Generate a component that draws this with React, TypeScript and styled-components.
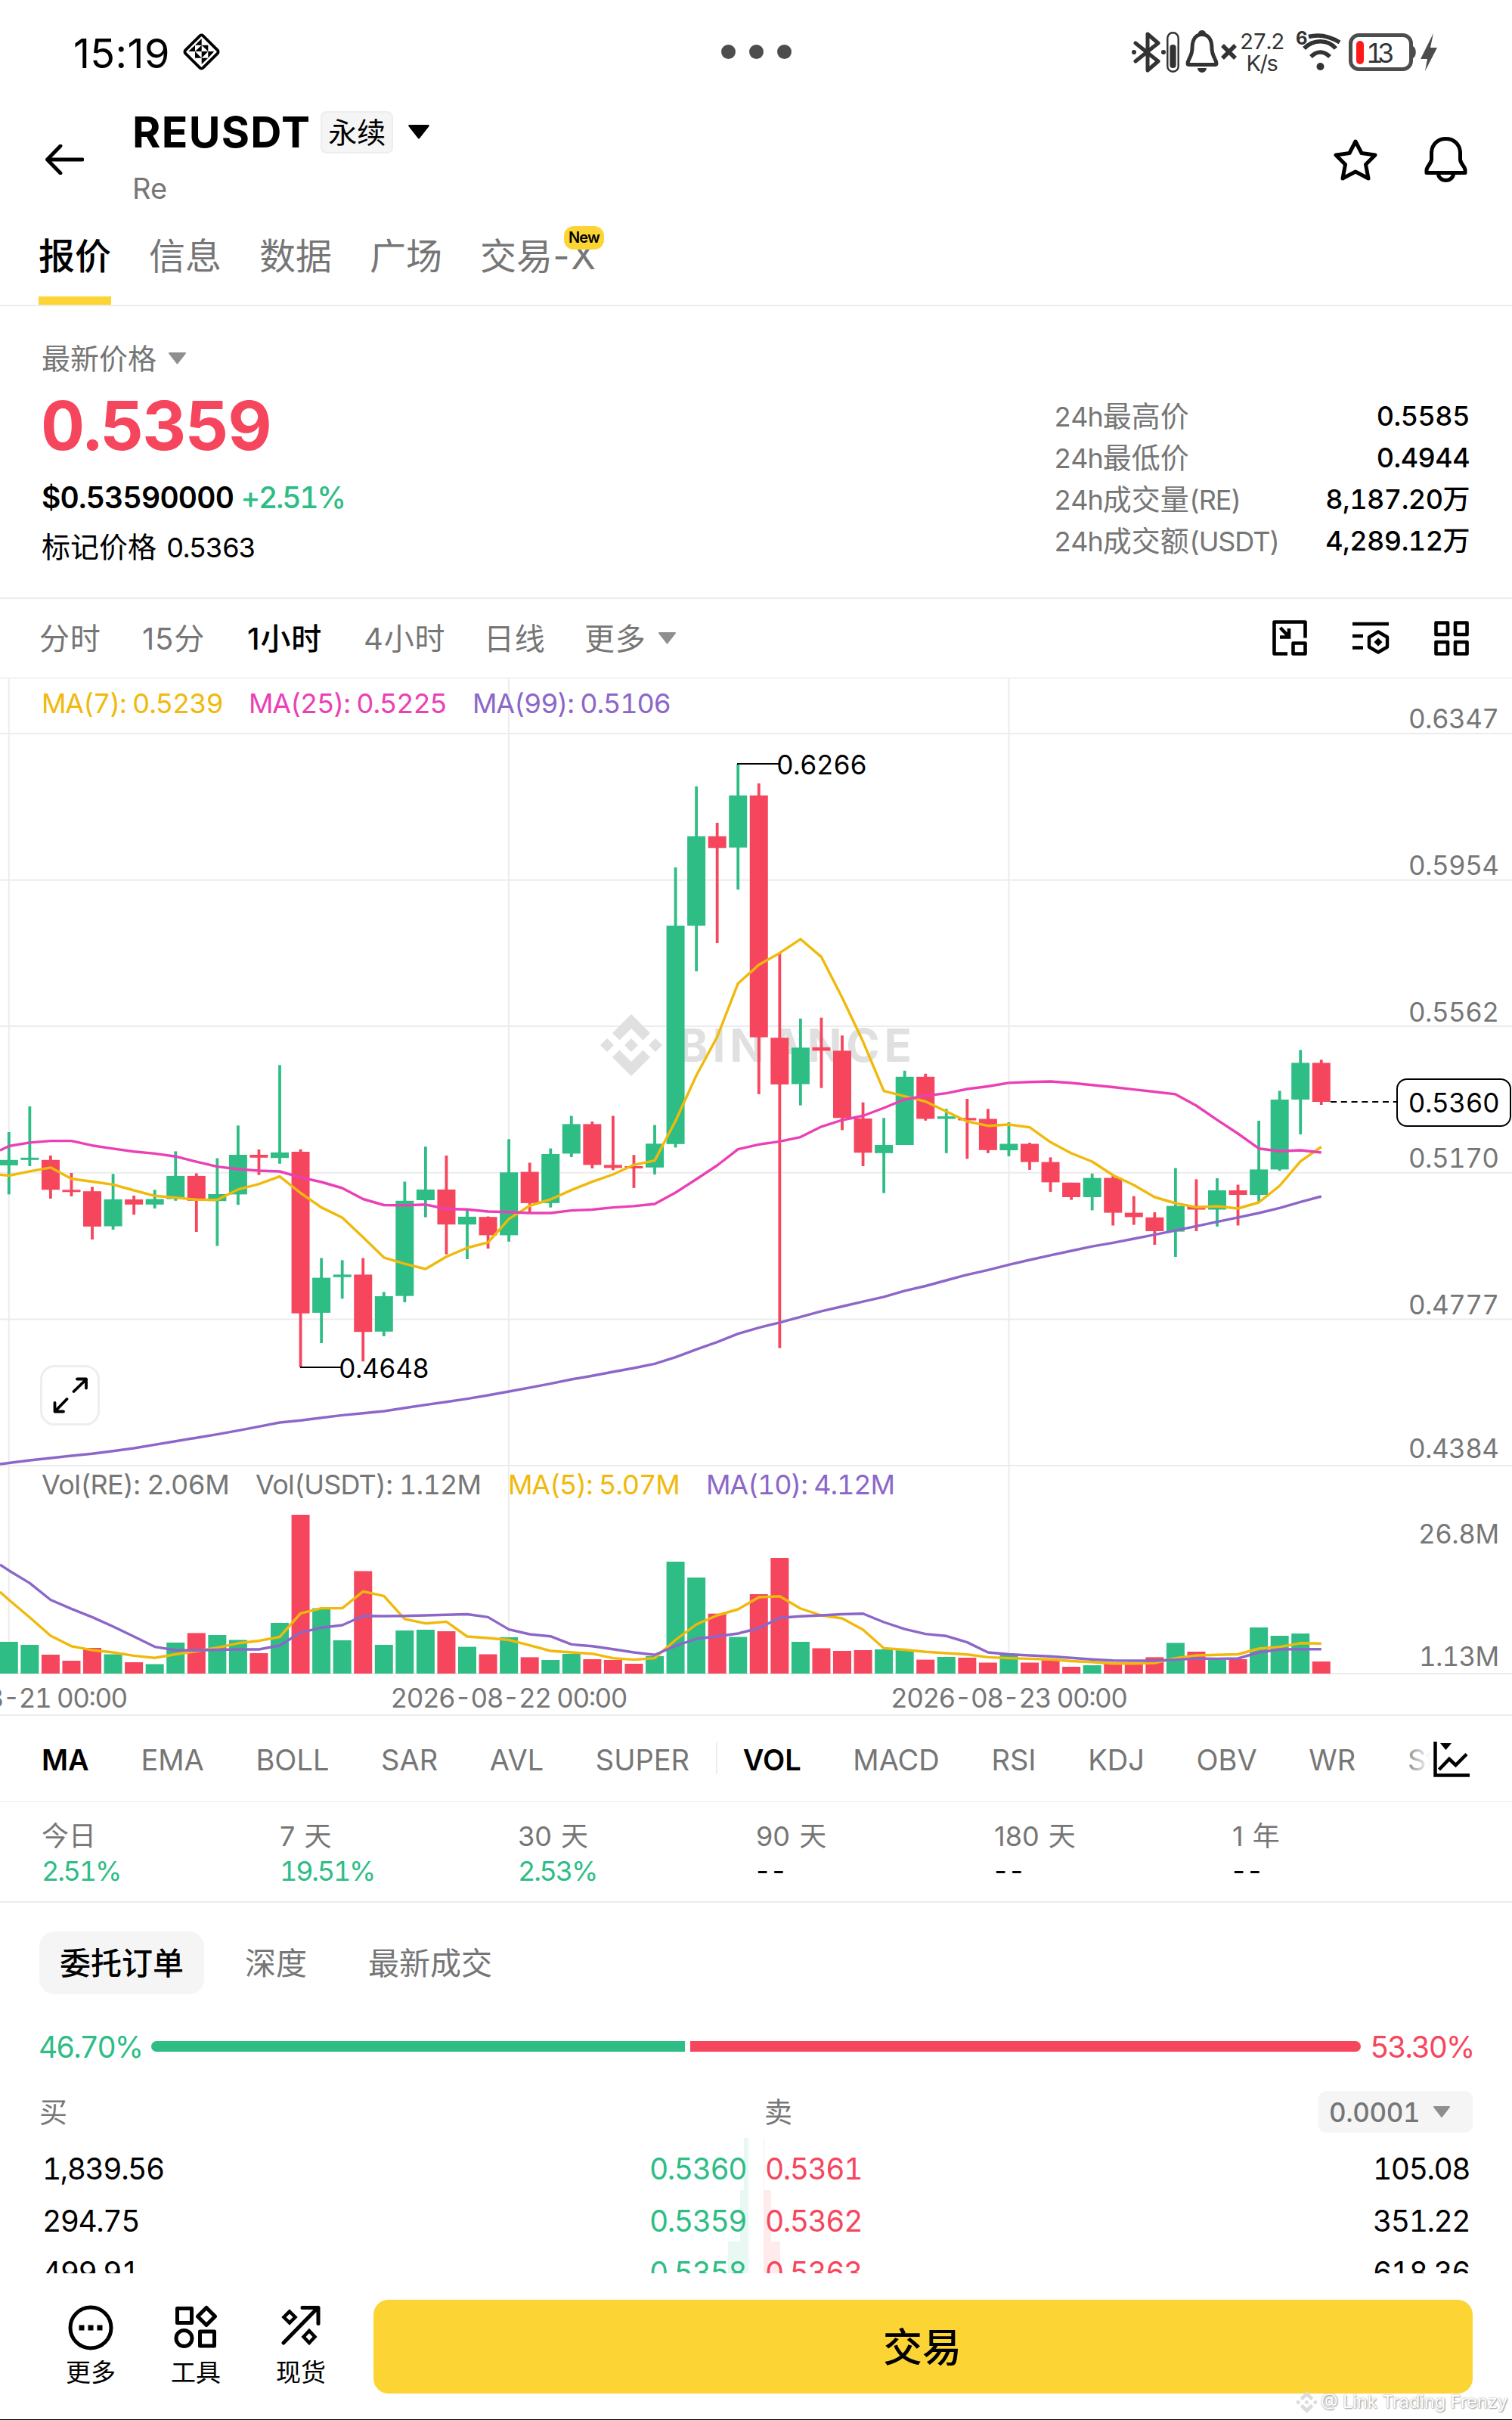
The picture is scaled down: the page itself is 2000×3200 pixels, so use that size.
import React from 'react';
import styled, { createGlobalStyle } from 'styled-components';

const UP = '#2ebd85';
const DOWN = '#f6465d';
const BRAND = '#fcd535';
const GRAY = '#767676';
const MUTED = '#8f8f8f';
const LINE = '#ececec';
const MA_YELLOW = '#f0b90b';
const MA_PINK = '#eb40b5';
const MA_PURPLE = '#8c66c8';

const FONT = "Inter, 'Noto Sans CJK SC', sans-serif";

// --- chart data, in chart units (y grows downwards) ---

const FIRST_X = 11.8;
const STEP = 27.555;
const CANDLE_W = 24;
const CHART_TOP = 898;
const VOL_BASE = 2213;

const xAt = (i: number) => FIRST_X + STEP * i;

type Candle = [up: 0 | 1, high: number, top: number, bottom: number, low: number, vol: number];

const candles: Candle[] = [
  [1, 1497, 1533.8, 1541, 1579.4, 2171],
  [1, 1463, 1530.8, 1533.8, 1542, 2175],
  [0, 1528, 1533.8, 1573.3, 1585, 2188],
  [0, 1551, 1573.3, 1576, 1582, 2196],
  [0, 1569.4, 1575.2, 1621.9, 1639, 2179],
  [1, 1552.2, 1585.9, 1621.5, 1626, 2187.5],
  [0, 1581, 1586, 1592.8, 1606.2, 2198],
  [1, 1573.3, 1585.5, 1592.8, 1598, 2200.5],
  [1, 1522.4, 1554.9, 1585.5, 1587.8, 2172],
  [0, 1551.5, 1554.9, 1587.8, 1629, 2159.4],
  [1, 1531.5, 1579, 1588.2, 1647.5, 2162],
  [1, 1488.3, 1527, 1579.4, 1593.2, 2168.5],
  [0, 1520, 1527, 1530.8, 1553.7, 2186],
  [1, 1408.3, 1523.9, 1531.2, 1538.8, 2146],
  [0, 1519.7, 1523, 1736.7, 1807.9, 2003],
  [1, 1663.6, 1689.6, 1735.9, 1776, 2126.6],
  [1, 1666.3, 1685.4, 1688.8, 1717.2, 2169],
  [0, 1663.6, 1685.4, 1761.2, 1800.2, 2077.5],
  [1, 1708.4, 1714, 1760.8, 1766.9, 2175],
  [1, 1562.5, 1587.8, 1713.7, 1722, 2156],
  [1, 1516.2, 1572.9, 1587, 1609.6, 2155],
  [0, 1528, 1572.9, 1619.2, 1658.6, 2157],
  [1, 1600.8, 1608.9, 1619.2, 1665, 2177.6],
  [0, 1608.5, 1609.2, 1633.4, 1651, 2187.5],
  [1, 1506.3, 1550.3, 1633.4, 1641.8, 2165],
  [0, 1537.5, 1549.6, 1590.9, 1603, 2191.4],
  [1, 1518.6, 1526, 1590.9, 1596.6, 2195],
  [1, 1475.5, 1486.4, 1525.4, 1530, 2187],
  [0, 1483, 1486.4, 1540.4, 1545, 2194],
  [0, 1475.5, 1540.4, 1544.4, 1547.3, 2195],
  [0, 1527.2, 1542, 1545, 1570.8, 2200],
  [1, 1487.6, 1512.3, 1543.8, 1553, 2190],
  [1, 1147, 1224, 1512.8, 1517.4, 2065],
  [1, 1039.8, 1105.8, 1224, 1284.3, 2086],
  [0, 1088, 1105.8, 1121.3, 1247, 2133.7],
  [1, 1010, 1051.8, 1120.7, 1176.4, 2164.5],
  [0, 1035.8, 1051.8, 1371.6, 1446.8, 2108],
  [0, 1260.8, 1372.2, 1434, 1782.6, 2060],
  [1, 1346.9, 1385.3, 1433.6, 1461.7, 2171],
  [0, 1345.7, 1384.8, 1389.4, 1438.7, 2179.5],
  [0, 1369.3, 1389.4, 1478.3, 1494.4, 2183],
  [0, 1457.7, 1479, 1524.2, 1542, 2182],
  [1, 1478.3, 1514, 1524.8, 1577.6, 2181],
  [1, 1415.8, 1423.8, 1514, 1514, 2182],
  [0, 1419.8, 1423.8, 1479.5, 1481.8, 2194.6],
  [1, 1466.3, 1476.2, 1479.5, 1524.8, 2191],
  [0, 1453, 1478.3, 1481.5, 1532.3, 2192],
  [0, 1466.3, 1479.5, 1520.8, 1524.8, 2198.5],
  [1, 1484, 1512.5, 1521, 1529, 2187.5],
  [0, 1511, 1512.5, 1536.6, 1546.9, 2198.5],
  [0, 1530.4, 1536.6, 1563.4, 1575.9, 2195.4],
  [0, 1563.8, 1563.8, 1583, 1586.6, 2204],
  [1, 1551.8, 1557.6, 1583, 1600.4, 2202],
  [0, 1554.5, 1557.6, 1603.6, 1620.5, 2199],
  [0, 1581.7, 1603.6, 1609.4, 1619.6, 2199],
  [0, 1603, 1609.8, 1628, 1646, 2191.4],
  [1, 1544.6, 1594.6, 1628.6, 1662, 2172.4],
  [0, 1559.4, 1594.6, 1599.5, 1628, 2184],
  [1, 1558, 1574, 1599.5, 1621.9, 2195],
  [0, 1566.5, 1574, 1580, 1620.5, 2194],
  [1, 1482, 1546.4, 1580, 1589.3, 2152],
  [1, 1442.4, 1454, 1546.4, 1548.2, 2163],
  [1, 1388.4, 1405.4, 1454, 1500, 2160],
  [0, 1401.3, 1405.4, 1457, 1461, 2197]
];

// the first value of every series is the one at the left edge (x = 0)
const ma7 = [
  1553.4, 1554.5, 1548.8, 1543.8, 1558.7, 1562.5, 1566.4, 1574, 1581.3, 1583.6, 1586.3, 1586.6, 1572.9, 1565.6, 1555.6, 1577.5,
  1596.6, 1610, 1636, 1662.8, 1671.2, 1678, 1661.7, 1650, 1642.9, 1611.9, 1594.3, 1586, 1573.6, 1562.7, 1553, 1540.3, 1534.6,
  1482.3, 1422, 1371, 1300.4, 1275.7, 1260.2, 1241.8, 1265.4, 1319.3, 1377.3, 1442.7, 1449.6, 1456.5, 1469.7, 1482.9, 1488.7,
  1487, 1490.6, 1510.3, 1525, 1536, 1554, 1567, 1583, 1591, 1596.4, 1595, 1598, 1590, 1568, 1535.7, 1516.5
];
const ma25 = [
  1521.2, 1515.5, 1510.9, 1508.6, 1508.6, 1514.7, 1518.9, 1522.7, 1525.4, 1529.2, 1536.1, 1542.6, 1546, 1548, 1549, 1556.8,
  1563, 1571, 1585.5, 1593.5, 1593.9, 1592.8, 1598.5, 1599.3, 1602, 1602.7, 1604, 1604, 1600.6, 1599.5, 1596.6, 1594.9, 1592,
  1577, 1559.3, 1541, 1519.7, 1513.4, 1509.4, 1503.6, 1489.8, 1481, 1475.5, 1465, 1453.7, 1449, 1445.6, 1440, 1436.5, 1431.9,
  1430.7, 1430, 1432, 1434.8, 1437.5, 1440.6, 1443.7, 1446.9, 1462, 1480.8, 1499, 1518.7, 1522.3, 1521, 1524
];
const ma99 = [
  1936, 1934.5, 1931, 1928, 1925, 1922.3, 1918.8, 1915, 1910.4, 1905.8, 1901.2, 1896.6, 1891.7, 1886.3, 1881, 1878.3, 1874.8,
  1871.4, 1868.7, 1866, 1861.8, 1857.6, 1853.8, 1849.6, 1845, 1840, 1834.8, 1829.6, 1824, 1819.3, 1814, 1809, 1803.3, 1794.7,
  1784.3, 1774.6, 1763.7, 1755.6, 1748.8, 1741.3, 1733.8, 1727.5, 1721.2, 1714.9, 1706.8, 1700.5, 1693, 1685.6, 1679.3, 1672.4,
  1666, 1659.8, 1654, 1648.2, 1643.3, 1638, 1632.6, 1627.2, 1621.4, 1615.6, 1609.8, 1604, 1597.3, 1589.3, 1582
];
const volMa5 = [
  2105, 2115.5, 2138.8, 2163, 2176.8, 2182, 2185, 2189.4, 2192.2, 2187.5, 2183.5, 2178.8, 2172.8, 2169.7, 2164.5, 2133.3,
  2126.6, 2126.6, 2104.4, 2110.4, 2140.8, 2146.7, 2144.4, 2164, 2166, 2168.5, 2175.6, 2183, 2185, 2186.7, 2192.6, 2194.6,
  2192.6, 2168.5, 2148, 2136, 2128, 2112, 2110.8, 2127, 2136, 2140, 2155, 2179.5, 2181.5, 2184.3, 2186, 2187.8, 2191.4,
  2192.6, 2193.4, 2194.2, 2196.5, 2197.7, 2199.7, 2199.7, 2199, 2192.6, 2189, 2188.2, 2187.5, 2180, 2177.6, 2172.8, 2173.2
];
const volMa10 = [
  2069, 2076.7, 2093.4, 2115.5, 2127.4, 2138.4, 2150.7, 2164, 2177.6, 2182, 2182.3, 2181.5, 2181, 2181, 2176, 2158.6, 2152.3,
  2149, 2136.8, 2137, 2136.8, 2136, 2135.3, 2134.5, 2138.4, 2154.6, 2161, 2163.7, 2174.4, 2176.8, 2180.7, 2185, 2188.2, 2176.4,
  2167, 2163.7, 2160, 2153, 2139.2, 2137.2, 2136, 2134.5, 2133.7, 2145, 2154.2, 2160.6, 2163.3, 2171.6, 2185, 2187.5, 2189,
  2190.2, 2192.2, 2194.2, 2195.8, 2196, 2196, 2194.6, 2193, 2193.4, 2193, 2185, 2181, 2180.7, 2180.7
];

const toPoints = (values: number[]) => values.map((y, i) => `${i === 0 ? 0 : xAt(i - 1)},${y}`).join(' ');

const priceAxis = [
  { label: '0.6347', line: 970, baseline: 962.5 },
  { label: '0.5954', line: 1163.8, baseline: 1157 },
  { label: '0.5562', line: 1357, baseline: 1351 },
  { label: '0.5170', line: 1550.7, baseline: 1544 },
  { label: '0.4777', line: 1744.4, baseline: 1738 },
  { label: '0.4384', line: 1938, baseline: 1928 }
];

const dayLines = [
  { x: 11.8, label: '2026-08-21 00:00' },
  { x: 673, label: '2026-08-22 00:00' },
  { x: 1334.5, label: '2026-08-23 00:00' }
];

const stats = [
  { pre: '24h', zh: '最高价', unit: '', value: '0.5585' },
  { pre: '24h', zh: '最低价', unit: '', value: '0.4944' },
  { pre: '24h', zh: '成交量', unit: '(RE)', value: '8,187.20万' },
  { pre: '24h', zh: '成交额', unit: '(USDT)', value: '4,289.12万' }
];

const mainIndicators = ['MA', 'EMA', 'BOLL', 'SAR', 'AVL', 'SUPER'];
const subIndicators = ['VOL', 'MACD', 'RSI', 'KDJ', 'OBV', 'WR', 'StochRSI'];

const periods = [
  { label: '今日', value: '2.51%' },
  { label: '7 天', value: '19.51%' },
  { label: '30 天', value: '2.53%' },
  { label: '90 天', value: '--' },
  { label: '180 天', value: '--' },
  { label: '1 年', value: '--' }
];

const bids = [
  { amount: '1,839.56', price: '0.5360', depth: 6 },
  { amount: '294.75', price: '0.5359', depth: 11 },
  { amount: '499.91', price: '0.5358', depth: 27 }
];
const asks = [
  { amount: '105.08', price: '0.5361', depth: 1 },
  { amount: '351.22', price: '0.5362', depth: 10 },
  { amount: '618.36', price: '0.5363', depth: 22 }
];

// --- icons ---

const Caret = ({ size = 24, color = MUTED }: { size?: number; color?: string }) => (
  <svg width={size} height={size * 0.64} viewBox="0 0 25 16">
    <path d="M2 1h21L12.5 14.5z" fill={color} stroke={color} strokeWidth="2" strokeLinejoin="round" />
  </svg>
);

const LatticeIcon = () => (
  <svg width="51" height="51" viewBox="0 0 51 51">
    <rect x="9" y="9" width="33" height="33" rx="3" transform="rotate(45 25.5 25.5)" fill="none" stroke="#000" strokeWidth="3.8" />
    <path
      d="M17 16.7h8.7V8zM8.3 25H17v-8.3zM17 25h8.7v-8.3zM25.7 16.7h8.6V25zM17 25v8.7h8.7zM25.7 25v8.7l8.6-8.7zM34.3 25h8l-8 8.7zM25.7 33.7h8.6L25.7 42z"
      fill="#000"
    />
  </svg>
);

const BluetoothIcon = () => (
  <svg width="46" height="54" viewBox="0 0 46 54">
    <path d="M5 15l30 24-14 12V3l14 12L5 39" fill="none" stroke="#333" strokeWidth="5" strokeLinejoin="round" strokeLinecap="round" />
    <circle cx="3" cy="27" r="3" fill="#333" />
    <circle cx="42" cy="27" r="3" fill="#333" />
  </svg>
);

const StickIcon = () => (
  <svg width="17" height="54" viewBox="0 0 17 54">
    <rect x="1.3" y="1.3" width="14.4" height="51.4" rx="7" fill="none" stroke="#333" strokeWidth="2.4" />
    <rect x="4.4" y="17" width="8.2" height="31" rx="4" fill="#333" />
  </svg>
);

const MutedBellIcon = () => (
  <svg width="70" height="57" viewBox="0 0 70 57">
    <path
      d="M9 24C9 12 14 5.5 22 5.5S35 12 35 24c0 10 6 15 6 20 0 1-1 1.5-2 1.5H5c-1 0-2-.5-2-1.5 0-5 6-10 6-20z"
      fill="none"
      stroke="#333"
      strokeWidth="5"
    />
    <path d="M17 4a5 4 0 0 1 10 0zM16 50h12a6 6 0 0 1-12 0z" fill="#333" />
    <path d="M49 20l17 17M66 20L49 37" stroke="#333" strokeWidth="5.5" />
  </svg>
);

const WifiIcon = () => (
  <svg width="64" height="56" viewBox="0 0 64 56">
    <text x="0" y="18" fontSize="24" fontWeight="700" fill="#333">
      6
    </text>
    <path d="M17 7.5C32 3.5 46 7.5 58 15M11 23c12-12.5 31-12.5 42 0M20 34c8-8 17-8 25 0" fill="none" stroke="#333" strokeWidth="5.5" />
    <circle cx="32.5" cy="47" r="5" fill="#333" />
  </svg>
);

const BatteryIcon = () => (
  <svg width="90" height="50" viewBox="0 0 90 50">
    <rect x="2.5" y="2.5" width="80" height="45" rx="11" fill="none" stroke="#4d4d4d" strokeWidth="5" />
    <path d="M85 17c5 2 5 14 0 16z" fill="#4d4d4d" />
    <rect x="10" y="10" width="10" height="31" rx="5" fill="#ff1a1a" />
    <text x="23" y="38.5" fontSize="35" fill="#333" textLength="38">
      13
    </text>
  </svg>
);

const BoltIcon = () => (
  <svg width="22" height="50" viewBox="0 0 22 50">
    <path d="M17 0L0 34h9L6 50 22 19h-9z" fill="#4d4d4d" />
  </svg>
);

const BackIcon = () => (
  <svg width="52" height="40" viewBox="0 0 52 40">
    <path d="M50 20H4M21 2L3.5 20 21 38" fill="none" stroke="#000" strokeWidth="4.8" strokeLinejoin="round" strokeLinecap="round" />
  </svg>
);

const StarIcon = () => (
  <svg width="58" height="58" viewBox="0 0 58 58">
    <path
      d="M29 5l8 15.5 18 2.5-12.5 12.5L46 54l-17-9-17 9 3.5-18.5L3 23l18-2.5z"
      fill="none"
      stroke="#000"
      strokeWidth="5"
      strokeLinejoin="round"
    />
  </svg>
);

const BellIcon = () => (
  <svg width="57" height="60" viewBox="0 0 57 60">
    <path
      d="M3 44C3 39 9 36 9.5 30V20C10.5 9 18.5 2.5 28.5 2.5S46.5 9 47.5 20v10C48 36 54 39 54 44v3.5H3z"
      fill="none"
      stroke="#000"
      strokeWidth="5"
      strokeLinejoin="round"
    />
    <path d="M18.5 48.5a10 9 0 0 0 20 0" fill="none" stroke="#000" strokeWidth="5" />
  </svg>
);

const MinimizeIcon = () => (
  <svg width="46" height="47" viewBox="0 0 46 47">
    <path d="M20 44.5H2.5v-42h41v21" fill="none" stroke="#000" strokeWidth="4.6" strokeLinejoin="round" />
    <path d="M10.5 10l11 11.5M22 11v11.5H10" fill="none" stroke="#000" strokeWidth="4.6" />
    <rect x="27.5" y="30.5" width="16" height="14" fill="none" stroke="#000" strokeWidth="4.6" strokeLinejoin="round" />
  </svg>
);

const SettingsIcon = () => (
  <svg width="50" height="44" viewBox="0 0 50 44">
    <path d="M1 3h48M1 19h14M1 34.5h14" stroke="#000" strokeWidth="4.6" />
    <path d="M35 13.5l12 7v13L35 40.5l-12-7v-13z" fill="none" stroke="#000" strokeWidth="4.4" strokeLinejoin="round" />
    <path d="M35 21.5l5.5 5.5-5.5 5.5-5.5-5.5z" fill="#000" />
  </svg>
);

const GridIcon = () => (
  <svg width="46" height="46" viewBox="0 0 46 46">
    <g fill="none" stroke="#000" strokeWidth="4.6" strokeLinejoin="round">
      <rect x="2.5" y="2.5" width="15.5" height="15.5" />
      <rect x="28" y="2.5" width="15.5" height="15.5" />
      <rect x="2.5" y="28" width="15.5" height="15.5" />
      <rect x="28" y="28" width="15.5" height="15.5" />
    </g>
  </svg>
);

const ExpandIcon = () => (
  <svg width="46" height="48" viewBox="0 0 46 48">
    <path
      d="M27.5 19L44 3M32 2.5h12v12M18.5 29L3 45M2.5 34v11.5H14"
      fill="none"
      stroke="#000"
      strokeWidth="3.8"
      strokeLinejoin="round"
      strokeLinecap="round"
    />
  </svg>
);

const ChartIcon = () => (
  <svg width="48" height="48" viewBox="0 0 48 48">
    <path d="M2.5 1v44.5H48" fill="none" stroke="#000" strokeWidth="4.5" />
    <path d="M7.5 38L21 24l8.5 8L44 17.5" fill="none" stroke="#000" strokeWidth="4.5" />
    <path d="M9 3h15l-7.5 9z" fill="#000" />
  </svg>
);

const MoreIcon = () => (
  <svg width="60" height="60" viewBox="0 0 60 60">
    <circle cx="30" cy="30" r="27" fill="none" stroke="#000" strokeWidth="5" />
    <path d="M14.5 26.5h7v7h-7zM26.5 26.5h7v7h-7zM38.5 26.5h7v7h-7z" fill="#000" />
  </svg>
);

const ToolsIcon = () => (
  <svg width="58" height="58" viewBox="0 0 58 58">
    <g fill="none" stroke="#000" strokeWidth="5" strokeLinejoin="round">
      <rect x="4.5" y="4.5" width="19" height="19" />
      <path d="M43 3.5L54.5 15 43 26.5 31.5 15z" />
      <circle cx="13.5" cy="44" r="10.5" />
      <rect x="34.5" y="35" width="19" height="19" />
    </g>
  </svg>
);

const SpotIcon = () => (
  <svg width="52" height="54" viewBox="0 0 52 54">
    <path d="M3 50L48 4M28 3.5h21v21" fill="none" stroke="#000" strokeWidth="5" strokeLinejoin="round" strokeLinecap="round" />
    <path d="M11 8.5L18.5 16 11 23.5 3.5 16zM37 34l7.5 8-7.5 8-7.5-8z" fill="none" stroke="#000" strokeWidth="4.5" />
  </svg>
);

const BrandMark = ({ x = 0, y = 0, size = 82, color = '#e0e0e0' }) => (
  <svg x={x} y={y} width={size} height={size} viewBox="0 0 82 82">
    <path
      d="M41 0l25 25-9.5 9.5L41 19 25.5 34.5 16 25zM9 32l9 9-9 9-9-9zM73 32l9 9-9 9-9-9zM41 32l9 9-9 9-9-9zM16 57l9.5-9.5L41 63l15.5-15.5L66 57 41 82z"
      fill={color}
    />
  </svg>
);

// --- page ---

const PriceChart = () => (
  <ChartSvg viewBox={`0 ${CHART_TOP} 2000 1369`}>
    <g stroke={LINE} strokeWidth="2">
      {priceAxis.map(({ line }) => (
        <line key={line} x1="0" x2="2000" y1={line} y2={line} />
      ))}
      <line x1="0" x2="2000" y1={VOL_BASE} y2={VOL_BASE} />
      {dayLines.map(({ x }) => (
        <line key={x} x1={x} x2={x} y1={CHART_TOP} y2={VOL_BASE} />
      ))}
    </g>
    <BrandMark x={794} y={1341} />
    <text x="897" y="1403.5" fontSize="60" fontWeight="700" fill="#e0e0e0" textLength="309">
      BINANCE
    </text>
    {candles.map(([up, high, top, bottom, low, vol], i) => (
      <g key={i} fill={up ? UP : DOWN}>
        <rect x={xAt(i) - 1.9} y={high} width="3.8" height={low - high} />
        <rect x={xAt(i) - CANDLE_W / 2} y={top} width={CANDLE_W} height={Math.max(bottom - top, 3)} />
        <rect x={xAt(i) - CANDLE_W / 2} y={vol} width={CANDLE_W} height={VOL_BASE - vol} />
      </g>
    ))}
    <g fill="none" strokeWidth="3.4" strokeLinejoin="round">
      <polyline points={toPoints(ma7)} stroke={MA_YELLOW} />
      <polyline points={toPoints(ma25)} stroke={MA_PINK} />
      <polyline points={toPoints(ma99)} stroke={MA_PURPLE} />
      <polyline points={toPoints(volMa5)} stroke={MA_YELLOW} />
      <polyline points={toPoints(volMa10)} stroke={MA_PURPLE} />
    </g>
    <g stroke="#000" strokeWidth="2">
      <line x1="975" x2="1030" y1="1010" y2="1010" />
      <line x1="397" x2="451" y1="1808" y2="1808" />
      <line x1="1760" x2="1847" y1="1457" y2="1457" strokeDasharray="8 5.8" />
    </g>
    <g fontSize="35" fill="#000">
      <text x="1027" y="1023.5" textLength="120">
        0.6266
      </text>
      <text x="448" y="1822" textLength="120">
        0.4648
      </text>
    </g>
    <g fontSize="35" fill={GRAY}>
      {priceAxis.map(({ label, baseline }) => (
        <text key={label} x="1863" y={baseline} textLength="120">
          {label}
        </text>
      ))}
      <text x="1876" y="2041" textLength="107">
        26.8M
      </text>
      <text x="1877" y="2203" textLength="106">
        1.13M
      </text>
      {dayLines.map(({ x, label }) => (
        <text key={label} x={x - 156.5} y="2258" textLength="314">
          {label}
        </text>
      ))}
    </g>
  </ChartSvg>
);

const App = () => (
  <Page>
    <GlobalStyle />
    <StatusBar>
      <Clock>15:19</Clock>
      <LatticeIcon />
      <Dots>
        <i />
        <i />
        <i />
      </Dots>
      <StatusIcons>
        <BluetoothIcon />
        <StickIcon />
        <Gap $w={8} />
        <MutedBellIcon />
        <Speed>
          <span>27.2</span>
          <span>K/s</span>
        </Speed>
        <Gap $w={14} />
        <WifiIcon />
        <Gap $w={6} />
        <BatteryIcon />
        <Gap $w={5} />
        <BoltIcon />
      </StatusIcons>
    </StatusBar>

    <Header>
      <BackIcon />
      <Pair>
        <PairName>
          REUSDT
          <Badge>永续</Badge>
          <Caret size={30} color="#000" />
        </PairName>
        <PairSub>Re</PairSub>
      </Pair>
      <HeaderActions>
        <StarIcon />
        <BellIcon />
      </HeaderActions>
    </Header>

    <Tabs>
      <Tab $active>报价</Tab>
      <Tab>信息</Tab>
      <Tab>数据</Tab>
      <Tab>广场</Tab>
      <Tab>
        交易<TabSuffix>-X</TabSuffix>
        <NewTag>New</NewTag>
      </Tab>
    </Tabs>

    <Summary>
      <div>
        <PriceLabel>
          最新价格
          <Caret size={25} />
        </PriceLabel>
        <Price>0.5359</Price>
        <FiatPrice>
          $0.53590000 <span>+2.51%</span>
        </FiatPrice>
        <MarkPrice>
          标记价格<span>0.5363</span>
        </MarkPrice>
      </div>
      <StatGrid>
        {stats.map(({ pre, zh, unit, value }) => (
          <StatRow key={zh}>
            <StatLabel>
              {pre}
              <b>{zh}</b>
              {unit}
            </StatLabel>
            <StatValue>{value}</StatValue>
          </StatRow>
        ))}
      </StatGrid>
    </Summary>

    <IntervalBar>
      <Interval $w={136}>分时</Interval>
      <Interval $w={139}>15分</Interval>
      <Interval $w={154} $active>
        1小时
      </Interval>
      <Interval $w={159}>4小时</Interval>
      <Interval $w={133}>日线</Interval>
      <Interval $w={97}>更多</Interval>
      <Caret size={25} />
      <ChartTools>
        <MinimizeIcon />
        <SettingsIcon />
        <GridIcon />
      </ChartTools>
    </IntervalBar>

    <Chart>
      <PriceChart />
      <Legend $top={12}>
        <LegendItem $color={MA_YELLOW} $w={274}>MA(7): 0.5239</LegendItem>
        <LegendItem $color={MA_PINK} $w={296}>MA(25): 0.5225</LegendItem>
        <LegendItem $color={MA_PURPLE} $w={300}>MA(99): 0.5106</LegendItem>
      </Legend>
      <Legend $top={1045}>
        <LegendItem $color={GRAY} $w={283} $spacing={-0.7}>
          Vol(RE): 2.06M
        </LegendItem>
        <LegendItem $color={GRAY} $w={334} $spacing={-0.8}>
          Vol(USDT): 1.12M
        </LegendItem>
        <LegendItem $color={MA_YELLOW} $w={262}>MA(5): 5.07M</LegendItem>
        <LegendItem $color={MA_PURPLE} $w={300}>MA(10): 4.12M</LegendItem>
      </Legend>
      <ExpandButton>
        <ExpandIcon />
      </ExpandButton>
      <LastPrice>0.5360</LastPrice>
    </Chart>

    <IndicatorBar>
      {mainIndicators.map(name => (
        <Indicator key={name} $active={name === 'MA'}>
          {name}
        </Indicator>
      ))}
      <Separator />
      {subIndicators.map(name => (
        <Indicator key={name} $active={name === 'VOL'}>
          {name}
        </Indicator>
      ))}
      <IndicatorMore>
        <ChartIcon />
      </IndicatorMore>
    </IndicatorBar>

    <Periods>
      {periods.map(({ label, value }) => (
        <Period key={label}>
          {label}
          <PeriodValue $empty={value === '--'}>{value}</PeriodValue>
        </Period>
      ))}
    </Periods>

    <BookTabs>
      <BookTab $active>委托订单</BookTab>
      <BookTab>深度</BookTab>
      <BookTab>最新成交</BookTab>
    </BookTabs>

    <Ratio>
      <RatioText $color={UP}>46.70%</RatioText>
      <RatioBar $color={UP} $grow={706} />
      <RatioBar $color={DOWN} $grow={886} $end />
      <RatioText $color={DOWN}>53.30%</RatioText>
    </Ratio>

    <BookHead>
      <BookSide>买</BookSide>
      <BookSide>卖</BookSide>
      <StepSelect>
        0.0001
        <Caret size={24} />
      </StepSelect>
    </BookHead>

    <Book>
      <div>
        {bids.map(({ amount, price, depth }) => (
          <BookRow key={price} $side="bid" $depth={depth}>
            <span>{amount}</span>
            <BookPrice $color={UP}>{price}</BookPrice>
          </BookRow>
        ))}
      </div>
      <div>
        {asks.map(({ amount, price, depth }) => (
          <BookRow key={price} $side="ask" $depth={depth}>
            <BookPrice $color={DOWN}>{price}</BookPrice>
            <span>{amount}</span>
          </BookRow>
        ))}
      </div>
    </Book>

    <Footer>
      <FooterItem>
        <MoreIcon />
        更多
      </FooterItem>
      <FooterItem>
        <ToolsIcon />
        工具
      </FooterItem>
      <FooterItem>
        <SpotIcon />
        现货
      </FooterItem>
      <TradeButton>交易</TradeButton>
      <Credit>
        <BrandMark size={29} color="#dcdcdc" />@ Link Trading Frenzy
      </Credit>
    </Footer>
  </Page>
);

export default App;

const GlobalStyle = createGlobalStyle`
  * {
    box-sizing: border-box;
  }
  body {
    margin: 0;
    background: #fff;
  }
  svg {
    display: block;
    flex: none;
  }
`;

const Page = styled.div`
  display: flex;
  flex-direction: column;
  width: 2000px;
  height: 3200px;
  overflow: hidden;
  background: #fff;
  color: #000;
  font-family: ${FONT};
  font-variant-numeric: tabular-nums;
  white-space: nowrap;
`;

const StatusBar = styled.div`
  display: flex;
  align-items: center;
  height: 137px;
  padding: 0 99px 0 97px;
`;

const Clock = styled.span`
  width: 144px;
  padding-top: 3px;
  font-size: 54px;
  font-variant-numeric: normal;
  letter-spacing: 0.4px;
`;

const Dots = styled.div`
  display: flex;
  gap: 18px;
  margin-left: 662px;
  i {
    width: 19px;
    height: 19px;
    border-radius: 50%;
    background: #4d4d4d;
  }
`;

const StatusIcons = styled.div`
  display: flex;
  align-items: center;
  margin-left: auto;
`;

const Gap = styled.span<{ $w: number }>`
  width: ${p => p.$w}px;
`;

const Speed = styled.span`
  display: flex;
  flex-direction: column;
  align-items: center;
  width: 62px;
  font-size: 29px;
  line-height: 29px;
  letter-spacing: -1.4px;
  color: #333;
`;

const Header = styled.header`
  display: flex;
  align-items: center;
  height: 148px;
  padding: 0 59px;
`;

const HeaderActions = styled.div`
  display: flex;
  align-items: center;
  gap: 62px;
`;

const Pair = styled.div`
  flex: 1;
  padding-left: 64px;
`;

const PairName = styled.div`
  display: flex;
  align-items: center;
  height: 76px;
  font-size: 57px;
  font-weight: 700;
  letter-spacing: 1.3px;
`;

const Badge = styled.span`
  margin: 0 19px 0 13px;
  padding: 0 8px;
  border: 2px solid #ededed;
  border-radius: 8px;
  background: #f5f5f5;
  font-size: 38px;
  font-weight: 400;
  letter-spacing: 0;
  line-height: 52px;
`;

const PairSub = styled.div`
  height: 73px;
  font-size: 38px;
  line-height: 73px;
  color: ${GRAY};
`;

const Tabs = styled.nav`
  display: flex;
  gap: 50px;
  height: 120px;
  padding-left: 51px;
  border-bottom: 2px solid ${LINE};
`;

const Tab = styled.div<{ $active?: boolean }>`
  position: relative;
  border-bottom: 11px solid ${p => (p.$active ? BRAND : 'transparent')};
  font-size: 48px;
  font-weight: ${p => (p.$active ? 500 : 400)};
  line-height: 107px;
  color: ${p => (p.$active ? '#000' : GRAY)};
`;

const TabSuffix = styled.span`
  letter-spacing: -3px;
  margin-left: -4px;
`;

const NewTag = styled.span`
  position: absolute;
  top: 14px;
  right: -14px;
  width: 53px;
  border-radius: 13px;
  background: ${BRAND};
  font-size: 20px;
  font-weight: 600;
  line-height: 31px;
  letter-spacing: -0.8px;
  text-align: center;
  color: #000;
`;

const Summary = styled.section`
  display: flex;
  justify-content: space-between;
  height: 387px;
  padding: 45px 56px 0 55px;
  border-bottom: 2px solid ${LINE};
`;

const PriceLabel = styled.div`
  display: flex;
  align-items: center;
  gap: 15px;
  font-size: 38px;
  line-height: 48px;
  color: ${GRAY};
`;

const Price = styled.div`
  margin-left: -1px;
  font-size: 90px;
  font-weight: 700;
  line-height: 130px;
  letter-spacing: -1.9px;
  color: ${DOWN};
`;

const FiatPrice = styled.div`
  font-size: 39px;
  font-weight: 600;
  line-height: 59px;
  letter-spacing: -0.8px;
  span {
    font-weight: 500;
    letter-spacing: -2.2px;
    color: ${UP};
  }
`;

const MarkPrice = styled.div`
  font-size: 38px;
  line-height: 73px;
  span {
    margin-left: 13px;
    font-size: 36px;
    letter-spacing: -1.5px;
  }
`;

const StatGrid = styled.div`
  width: 550px;
  padding-top: 73px;
`;

const StatRow = styled.div`
  display: flex;
  justify-content: space-between;
  height: 55px;
  font-size: 36px;
  line-height: 55px;
`;

const StatLabel = styled.span`
  letter-spacing: -1.1px;
  color: ${GRAY};
  b {
    font-size: 38px;
    font-weight: 400;
    letter-spacing: 0;
  }
`;

const StatValue = styled.span`
  font-weight: 500;
  letter-spacing: -0.5px;
`;

const IntervalBar = styled.nav`
  display: flex;
  align-items: center;
  height: 106px;
  padding: 0 57px 0 52px;
  border-bottom: 3px solid #f5f5f5;
`;

const Interval = styled.span<{ $w: number; $active?: boolean }>`
  width: ${p => p.$w}px;
  margin-top: -3px;
  font-size: 40px;
  font-weight: ${p => (p.$active ? 500 : 400)};
  font-variant-numeric: normal;
  letter-spacing: 0.8px;
  color: ${p => (p.$active ? '#000' : GRAY)};
`;

const ChartTools = styled.div`
  display: flex;
  align-items: center;
  gap: 59px;
  margin-left: auto;
`;

const Chart = styled.section`
  position: relative;
  height: 1371px;
  border-bottom: 2px solid ${LINE};
`;

const ChartSvg = styled.svg`
  width: 2000px;
  height: 1369px;
`;

const Legend = styled.div<{ $top: number }>`
  position: absolute;
  top: ${p => p.$top}px;
  left: 55px;
  display: flex;
`;

const LegendItem = styled.span<{ $color: string; $w: number; $spacing?: number }>`
  width: ${p => p.$w}px;
  font-size: 36px;
  line-height: 40px;
  letter-spacing: ${p => p.$spacing ?? -1.15}px;
  color: ${p => p.$color};
`;

const ExpandButton = styled.div`
  position: absolute;
  top: 907px;
  left: 53px;
  display: flex;
  align-items: center;
  justify-content: center;
  width: 79px;
  height: 80px;
  border: 3px solid #eee;
  border-radius: 19px;
  background: #fff;
`;

const LastPrice = styled.div`
  position: absolute;
  top: 528px;
  right: 1px;
  width: 152px;
  border: 2px solid #000;
  border-radius: 14px;
  background: #fff;
  font-size: 35px;
  line-height: 60px;
  letter-spacing: -0.4px;
  text-align: center;
`;

const IndicatorBar = styled.nav`
  position: relative;
  display: flex;
  align-items: center;
  height: 114px;
  padding: 3px 0 0 55px;
  border-bottom: 1px solid ${LINE};
  overflow: hidden;
`;

const Indicator = styled.span<{ $active?: boolean }>`
  flex: none;
  margin-right: 68.7px;
  font-size: 38px;
  font-weight: ${p => (p.$active ? 600 : 400)};
  color: ${p => (p.$active ? '#000' : GRAY)};
`;

const Separator = styled.span`
  flex: none;
  width: 2px;
  height: 42px;
  margin: -5px 34px 0 -34px;
  background: ${LINE};
`;

const IndicatorMore = styled.div`
  position: absolute;
  top: 0;
  right: 0;
  display: flex;
  align-items: center;
  width: 144px;
  height: 113px;
  padding-left: 40px;
  background: linear-gradient(to right, rgba(255, 255, 255, 0), #fff 36px);
`;

const Periods = styled.section`
  display: flex;
  height: 133px;
  padding: 23px 0 0 55px;
  border-bottom: 2px solid ${LINE};
`;

const Period = styled.div`
  width: 315px;
  font-size: 36px;
  font-variant-numeric: normal;
  line-height: 44px;
  word-spacing: 2px;
  color: ${GRAY};
`;

const PeriodValue = styled.div<{ $empty: boolean }>`
  margin-top: 2px;
  margin-left: ${p => (p.$empty ? -3 : 0)}px;
  font-variant-numeric: tabular-nums;
  letter-spacing: -2.2px;
  color: ${p => (p.$empty ? '#000' : UP)};
`;

const BookTabs = styled.nav`
  display: flex;
  height: 121px;
  padding: 38px 0 0 52px;
`;

const BookTab = styled.span<{ $active?: boolean }>`
  margin-right: 27px;
  padding: 0 27px;
  border-radius: 20px;
  background: ${p => (p.$active ? '#f5f5f5' : 'transparent')};
  font-size: 41px;
  font-weight: ${p => (p.$active ? 500 : 400)};
  line-height: 84px;
  color: ${p => (p.$active ? '#000' : GRAY)};
`;

const Ratio = styled.div`
  display: flex;
  align-items: center;
  gap: 7px;
  height: 60px;
  margin-top: 39px;
  padding: 0 51px 0 51px;
`;

const RatioText = styled.span<{ $color: string }>`
  width: 142px;
  font-size: 39px;
  letter-spacing: -2.2px;
  color: ${p => p.$color};
  &:last-child {
    text-align: right;
  }
`;

const RatioBar = styled.span<{ $color: string; $grow: number; $end?: boolean }>`
  flex: ${p => p.$grow} 0 0;
  height: 14px;
  border-radius: ${p => (p.$end ? '0 7px 7px 0' : '7px 0 0 7px')};
  background: ${p => p.$color};
`;

const BookHead = styled.div`
  display: grid;
  grid-template-columns: 959px 1fr auto;
  align-items: center;
  height: 55px;
  margin-top: 29px;
  padding: 0 52px;
  color: ${GRAY};
`;

const BookSide = styled.span`
  margin-top: -3px;
  font-size: 37px;
`;

const StepSelect = styled.span`
  display: flex;
  align-items: center;
  justify-content: space-between;
  width: 204px;
  height: 55px;
  padding: 0 29px 0 14px;
  border-radius: 10px;
  background: #f5f5f5;
  font-size: 35px;
  font-weight: 500;
  letter-spacing: -0.4px;
`;

const Book = styled.section`
  display: grid;
  grid-template-columns: 1fr 1fr;
  gap: 20px;
  height: 179px;
  margin-top: 7px;
  overflow: hidden;
`;

const BookRow = styled.div<{ $side: 'bid' | 'ask'; $depth: number }>`
  display: flex;
  justify-content: space-between;
  height: 68.6px;
  padding: ${p => (p.$side === 'bid' ? '13px 3px 0 56px' : '13px 56px 0 2px')};
  background: linear-gradient(${p => (p.$side === 'bid' ? '#eaf8f3, #eaf8f3' : '#ffeaec, #ffeaec')}) no-repeat
    ${p => (p.$side === 'bid' ? 'right' : 'left')} top / ${p => p.$depth}px 100%;
  font-size: 39px;
  line-height: 56px;
  letter-spacing: -1.5px;
`;

const BookPrice = styled.span<{ $color: string }>`
  color: ${p => p.$color};
`;

const Footer = styled.footer`
  position: relative;
  display: flex;
  height: 194px;
  padding: 35px 52px 0 86px;
  border-bottom: 1px solid #000;
  background: #fff;
`;

const FooterItem = styled.div`
  display: flex;
  flex-direction: column;
  align-items: center;
  justify-content: space-between;
  width: 68px;
  height: 113px;
  margin-right: 71px;
  padding-top: 7px;
  font-size: 33px;
  line-height: 34px;
`;

const TradeButton = styled.div`
  flex: 1;
  height: 124px;
  margin-left: -9px;
  padding-right: 2px;
  border-radius: 20px;
  background: ${BRAND};
  font-size: 52px;
  font-weight: 500;
  line-height: 128px;
  text-align: center;
`;

const Credit = styled.div`
  position: absolute;
  right: 6px;
  bottom: 7px;
  display: flex;
  align-items: center;
  gap: 4px;
  font-size: 23.5px;
  line-height: 32px;
  color: #fff;
  text-shadow: 0 0 2px #999, 1px 1px 2px #999;
`;
